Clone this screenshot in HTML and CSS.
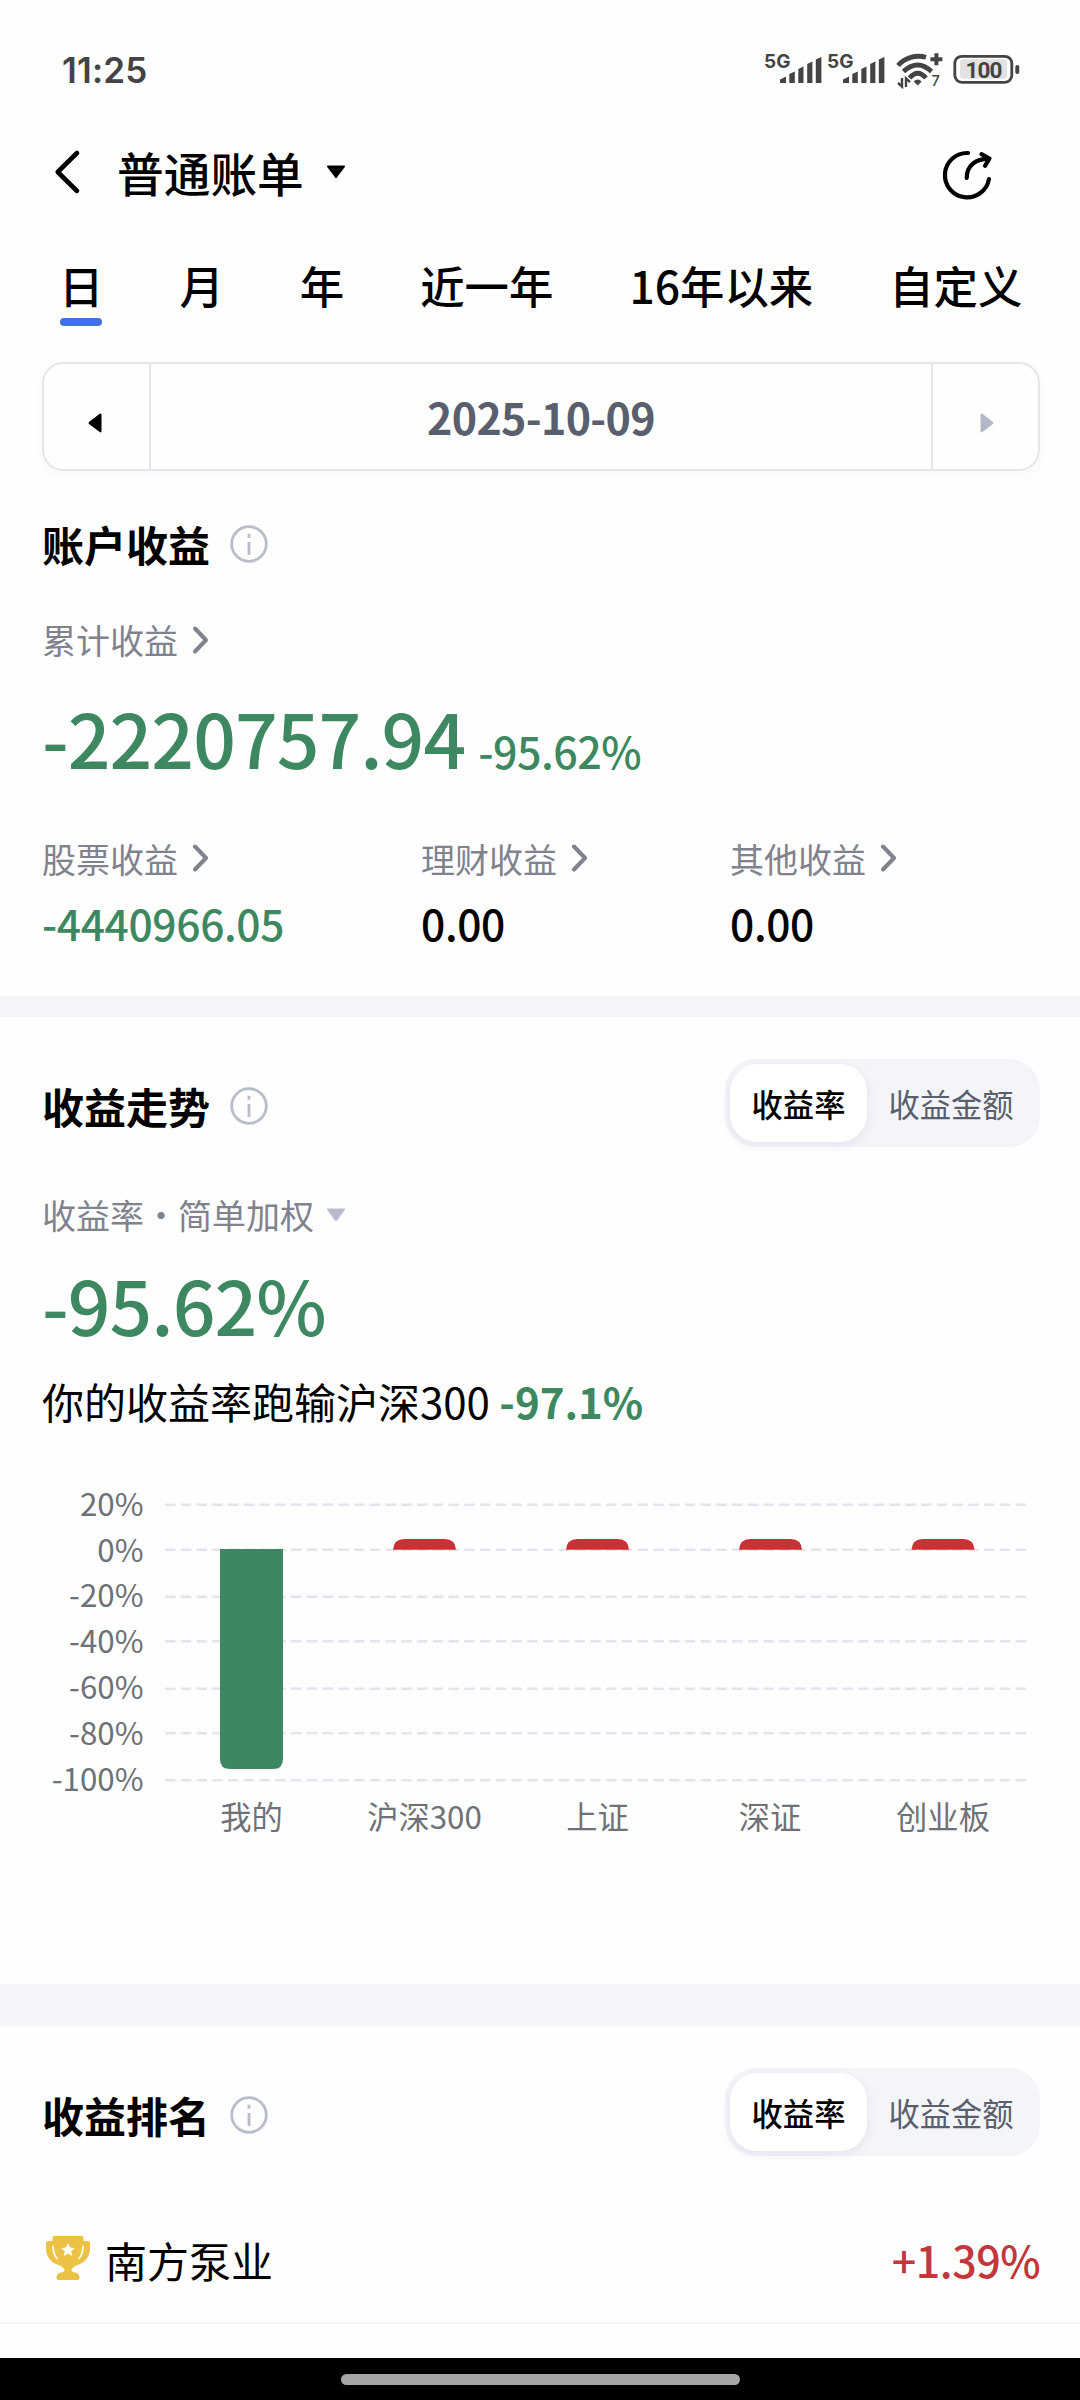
FILE: index.html
```html
<!DOCTYPE html>
<html lang="zh-CN">
<head>
<meta charset="utf-8">
<title>普通账单</title>
<link rel="stylesheet" href="styles.css">
</head>
<body>

<div class="status">
  <div class="time">11:25</div>
  <svg class="signals" width="260" height="40" viewBox="0 0 260 40">
    <g fill="#444">
      <text class="net" x="4" y="17.700">5G</text>
      <path d="M20 33v-3.500l6-3V33zM29.300 33V24l5.500-2.500V33zM38.300 33V19l5.200-2.500V33zM47.200 33V14l5.200-2.500V33zM55.800 33V9.500L61.400 7v26z"/>
      <text class="net" x="67" y="17.700">5G</text>
      <path d="M83 33v-3.500l6-3V33zM92.300 33V24l5.500-2.500V33zM101.300 33V19l5.200-2.500V33zM110.200 33V14l5.200-2.500V33zM118.800 33V9.500l5.600-2.500v26z"/>
    </g>
    <!-- wifi -->
    <g fill="none" stroke="#444" stroke-width="4.800">
      <path d="M138 15.500C145 7.500 156 4.500 166 7.300"/>
      <path d="M143.500 21.500Q157.700 8.500 171.500 21.500"/>
      <path d="M149.500 28Q157.700 18.500 166 28"/>
      <path d="M176.400 3.300v12M170.400 9.300h12" stroke-width="4"/>
    </g>
    <path d="M153.700 31.500q4-4 8 0l-4 4z" fill="#444"/>
    <path d="M142 28v8.500l-4-3.500M146 37v-8.500l4 3.500" fill="none" stroke="#444" stroke-width="2.400"/>
    <text class="gen" x="171.500" y="36">7</text>
    <!-- battery -->
    <rect x="194.800" y="6.300" width="57" height="26" rx="7" fill="none" stroke="#444" stroke-width="2.800"/>
    <rect x="200" y="9.300" width="47" height="19.500" rx="3" fill="#e2e2e2"/>
    <rect x="255.300" y="15" width="4" height="9" rx="2" fill="#444"/>
    <text class="batt" x="223.500" y="27.500" text-anchor="middle">100</text>
  </svg>
</div>

<div class="header">
  <svg class="back" width="30" height="48" viewBox="0 0 30 48"><path d="M25 5L5.700 24 25 43" fill="none" stroke="#000" stroke-width="4.600" stroke-linecap="round" stroke-linejoin="round"/></svg>
  <div class="title">普通账单</div>
  <svg class="caret" width="20" height="14" viewBox="0 0 20 14"><path d="M1.500 .5h17q1 .5.300 1.500L10.500 13q-.5.600-1 0L1.200 2Q.5 1 1.500.5z"/></svg>
  <svg class="share" width="54" height="54" viewBox="0 0 54 54"><g fill="none" stroke="#000" stroke-width="4.200" stroke-linecap="round" stroke-linejoin="round"><path d="M28 5A22.200 22.200 0 1 0 49 31"/><path d="M26.700 30C26.700 18 35 11 49 10.700M41.500 6.200L49.500 10.500 45 17.800"/></g></svg>
</div>

<div class="tabs">
  <div class="tab on">日</div>
  <div class="tab">月</div>
  <div class="tab">年</div>
  <div class="tab">近一年</div>
  <div class="tab">16年以来</div>
  <div class="tab">自定义</div>
</div>

<div class="datebox">
  <div class="arrow prev"><svg width="14" height="20" viewBox="0 0 14 20"><path d="M12 .5q1.500-.2 1.500 1.500v16q0 1.700-1.500 1.300L1 11q-1-1 0-2z"/></svg></div>
  <div class="date">2025-10-09</div>
  <div class="arrow next"><svg width="14" height="20" viewBox="0 0 14 20"><path d="M2 .5Q.5.300.5 2v16q0 1.700 1.500 1.300L13 11q1-1 0-2z" fill="#b4b8c6"/></svg></div>
</div>

<div class="section account">
  <div class="name">账户收益
    <svg class="info" width="38" height="38" viewBox="0 0 38 38"><circle cx="19" cy="19" r="17.300"/><path d="M19 8.800v4M19 17v13"/></svg>
  </div>
  <div class="label total">累计收益 <svg class="more" width="18" height="30" viewBox="0 0 18 30"><path d="M3 3.500L14 15 3 26.500"/></svg></div>
  <div class="sum green"><span class="big">-2220757.94</span><span class="rate">-95.62%</span></div>
  <div class="cols">
    <div>
      <div class="label">股票收益 <svg class="more" width="18" height="30" viewBox="0 0 18 30"><path d="M3 2.500L14 14 3 25.500"/></svg></div>
      <div class="value green">-4440966.05</div>
    </div>
    <div>
      <div class="label">理财收益 <svg class="more" width="18" height="30" viewBox="0 0 18 30"><path d="M3 2.500L14 14 3 25.500"/></svg></div>
      <div class="value">0.00</div>
    </div>
    <div>
      <div class="label">其他收益 <svg class="more" width="18" height="30" viewBox="0 0 18 30"><path d="M3 2.500L14 14 3 25.500"/></svg></div>
      <div class="value">0.00</div>
    </div>
  </div>
</div>

<div class="band"></div>

<div class="section trend">
  <div class="top">
    <div class="name">收益走势
      <svg class="info" width="38" height="38" viewBox="0 0 38 38"><circle cx="19" cy="19" r="17.300"/><path d="M19 8.800v4M19 17v13"/></svg>
    </div>
    <div class="switch"><div class="opt on">收益率</div><div class="opt">收益金额</div></div>
  </div>
  <div class="label kind">收益率・简单加权 <svg class="caret2" width="20" height="14" viewBox="0 0 20 14"><path d="M1.500 .5h17q1 .5.300 1.500L10.500 13q-.5.600-1 0L1.200 2Q.5 1 1.500.5z"/></svg></div>
  <div class="big pct green">-95.62%</div>
  <div class="versus">你的收益率跑输沪深300 <b class="green">-97.1%</b></div>
</div>

<svg class="chart" width="1080" height="541" viewBox="0 0 1080 541">
  <g class="grid">
    <path d="M165 61.700H1027M165 106.700H1027M165 153.700H1027M165 198.300H1027M165 245.700H1027M165 290.300H1027M165 337.300H1027"/>
  </g>
  <g class="axis" text-anchor="end">
    <text x="143.500" y="72.500">20%</text>
    <text x="143.500" y="118.500">0%</text>
    <text x="143.500" y="164">-20%</text>
    <text x="143.500" y="210">-40%</text>
    <text x="143.500" y="256">-60%</text>
    <text x="143.500" y="302">-80%</text>
    <text x="143.500" y="348">-100%</text>
  </g>
  <path fill="#3d8861" d="M220 106h63v210q0 10-10 10h-43q-10 0-10-10z"/>
  <g fill="#cc3035">
    <path d="M393 106.700q1-10.700 11-10.700h41q10 0 11 10.700z"/>
    <path d="M566 106.700q1-10.700 11-10.700h41q10 0 11 10.700z"/>
    <path d="M739 106.700q1-10.700 11-10.700h41q10 0 11 10.700z"/>
    <path d="M911.500 106.700q1-10.700 11-10.700h41q10 0 11 10.700z"/>
  </g>
  <g class="axis" text-anchor="middle">
    <text x="251.500" y="385.500">我的</text>
    <text x="424.500" y="385.500">沪深300</text>
    <text x="597.500" y="385.500">上证</text>
    <text x="770" y="385.500">深证</text>
    <text x="943" y="385.500">创业板</text>
  </g>
</svg>

<div class="band tall"></div>

<div class="section rank">
  <div class="top">
    <div class="name">收益排名
      <svg class="info" width="38" height="38" viewBox="0 0 38 38"><circle cx="19" cy="19" r="17.300"/><path d="M19 8.800v4M19 17v13"/></svg>
    </div>
    <div class="switch"><div class="opt on">收益率</div><div class="opt">收益金额</div></div>
  </div>
  <div class="row">
    <svg class="cup" width="44" height="44" viewBox="0 0 44 44">
      <path fill="#ecc245" d="M8 0h28q1.500 0 1.500 1.500V5H42q2 0 2 2v6c0 8-6 14.500-14 16.500-3 2-4.500 3-4.500 4.500s2 2.500 5.500 3q1.500.5 2 2.500l.5 2.500q0 2-2 2h-19q-2 0-2-2l.5-2.500q.5-2 2-2.500c3.500-.5 5.500-1.500 5.500-3s-1.500-2.500-4.500-4.500C6 27.500 0 21 0 13V7q0-2 2-2h4.500V1.500Q6.500 0 8 0z"/>
      <path fill="none" stroke="#fffaf0" stroke-width="1.800" stroke-linecap="round" d="M7 10.500q.2 8 4 12M37 10.500q-.2 8-4 12"/>
      <path fill="#fff" d="M22 7l2 4.500 4.800.5-3.600 3.200 1 4.800-4.200-2.500-4.200 2.500 1-4.800-3.600-3.200 4.800-.5z"/>
    </svg>
    <div class="stock">南方泵业</div>
    <div class="gain">+1.39%</div>
  </div>
</div>

<div class="home"><div class="pill"></div></div>

</body>
</html>
```
FILE: styles.css
```css
body{
  margin: 0;
  width: 1080px;
  height: 2400px;
  overflow: hidden;
  display: flex;
  flex-direction: column;
  background: #fefefe;
  color: #000;
  font-family: "Noto Sans CJK SC", sans-serif;
}
body > *{flex: none;}
svg{display: block;flex: none;}
.green{color: #3d8861;}

.status{
  display: flex;
  justify-content: space-between;
  height: 140px;
  padding: 0 60px 0 62px;
  align-items: center;
}
.time{
  font-family: Inter, sans-serif;
  font-weight: 600;
  font-size: 35px;
  letter-spacing: .2px;
  color: #444;
}
.net{font: 700 19px Inter, sans-serif;}
.gen{font: 500 14.500px Inter, sans-serif;fill: #444;}
.batt{font: 700 22.500px Roboto, sans-serif;fill: #444;letter-spacing: -.9px;}

.header{
  display: flex;
  align-items: center;
  height: 63px;
  padding: 0 86px 0 52px;
}
.title{
  font-size: 46.700px;
  font-weight: 500;
  line-height: 63px;
  margin-left: 35px;
}
.caret{margin-left: 22px;}
.share{margin: 6px 0 0 auto;}

.tabs{
  display: flex;
  gap: 76px;
  padding: 52px 0 0 59px;
  font-size: 44.400px;
  font-weight: 500;
  line-height: 60px;
  white-space: nowrap;
}
.tab{position: relative;}
.tab.on::after{
  content: "";
  position: absolute;
  left: 1px;
  bottom: -11px;
  width: 42px;
  height: 8px;
  border-radius: 4px;
  background: #4272e2;
}

.datebox{
  display: flex;
  box-sizing: border-box;
  height: 109px;
  margin: 47px 40px 0 42px;
  border: 2px solid #e4e6e9;
  border-radius: 21px;
  box-shadow: 0 5px 12px rgba(40,60,80,.03);
}
.arrow{
  display: flex;
  width: 105px;
  align-items: center;
  justify-content: center;
  padding-top: 13px;
  box-sizing: border-box;
}
.prev{padding-right: 3px;}
.next{padding-left: 2px;}
.date{
  flex: 1;
  border: solid #e4e6e9;
  border-width: 0 2px;
  text-align: center;
  font-size: 43px;
  font-weight: 600;
  letter-spacing: -.7px;
  line-height: 104px;
  color: #5a5f6e;
}

.section{padding: 0 40px 0 42px;box-sizing: border-box;}
.name{
  display: flex;
  align-items: center;
  gap: 20px;
  font-size: 42px;
  font-weight: 700;
  line-height: 60px;
}
.info{
  fill: none;
  stroke: #b9bdc9;
  stroke-width: 2.800;
}
.label{
  display: flex;
  align-items: center;
  gap: 14px;
  font-size: 34px;
  line-height: 48px;
  color: #80828e;
}
.more{
  fill: none;
  stroke: #80828e;
  stroke-width: 4;
  stroke-linecap: round;
  stroke-linejoin: round;
}

.account{padding-top: 43px;height: 525px;}
.total{margin-top: 42px;}
.sum{
  display: flex;
  align-items: baseline;
  gap: 13px;
  height: 100px;
  margin-top: 23px;
}
.big{
  font-size: 75px;
  font-weight: 500;
  letter-spacing: -.013em;
  line-height: 100px;
}
.rate{
  font-size: 43px;
  font-weight: 500;
  letter-spacing: -.012em;
}
.cols{
  display: grid;
  grid-template-columns: 379px 309px 1fr;
  margin-top: 48px;
}
.value{
  font-size: 42.500px;
  font-weight: 500;
  letter-spacing: -.008em;
  line-height: 60px;
  margin-top: 10px;
}

.band{height: 21px;background: #f4f5f9;}
.band.tall{height: 42px;}

.trend{height: 426px;padding-top: 42px;}
.top{
  display: flex;
  justify-content: space-between;
  align-items: center;
  height: 88px;
}
.top .name{padding-top: 6px;}
.switch{
  display: flex;
  box-sizing: border-box;
  width: 315px;
  height: 88px;
  padding: 5px;
  border-radius: 31px;
  background: #f4f5f9;
}
.opt{
  flex: 1;
  text-align: center;
  font-size: 31.300px;
  line-height: 79px;
  color: #5a5f6e;
}
.opt.on{
  flex: none;
  width: 137px;
  border-radius: 27px;
  background: #fff;
  color: #000;
  font-weight: 500;
  box-shadow: 0 3px 12px rgba(30,30,60,.08);
}
.kind{margin-top: 44px;gap: 12px;}
.caret2{fill: #b8bbc9;}
.pct{margin-top: 15px;}
.versus{
  margin-top: 17px;
  font-size: 42px;
  line-height: 60px;
}

.grid{
  fill: none;
  stroke: #e1e5ed;
  stroke-width: 2.600;
  stroke-dasharray: 10.500 5.250;
}
.axis{font-size: 31.300px;fill: #6e7178;}

.rank{padding-top: 42px;}
.row{
  display: flex;
  align-items: center;
  height: 60px;
  padding: 73px 0 33px;
  margin: 0 -40px 0 -42px;
  border-bottom: 2px solid #f3f4f6;
}
.cup{margin: 0 0 2px 46px;}
.stock{margin-left: 15px;font-size: 42px;}
.gain{
  margin: 0 40px 0 auto;
  font-size: 43px;
  font-weight: 500;
  letter-spacing: -.012em;
  color: #c3363b;
}

.home{
  box-sizing: border-box;
  height: 42px;
  margin-top: auto;
  padding-top: 16px;
  background: #000;
}
.pill{
  width: 399px;
  height: 11px;
  margin: 0 auto;
  border-radius: 6px;
  background: #a5a5a5;
}
```
